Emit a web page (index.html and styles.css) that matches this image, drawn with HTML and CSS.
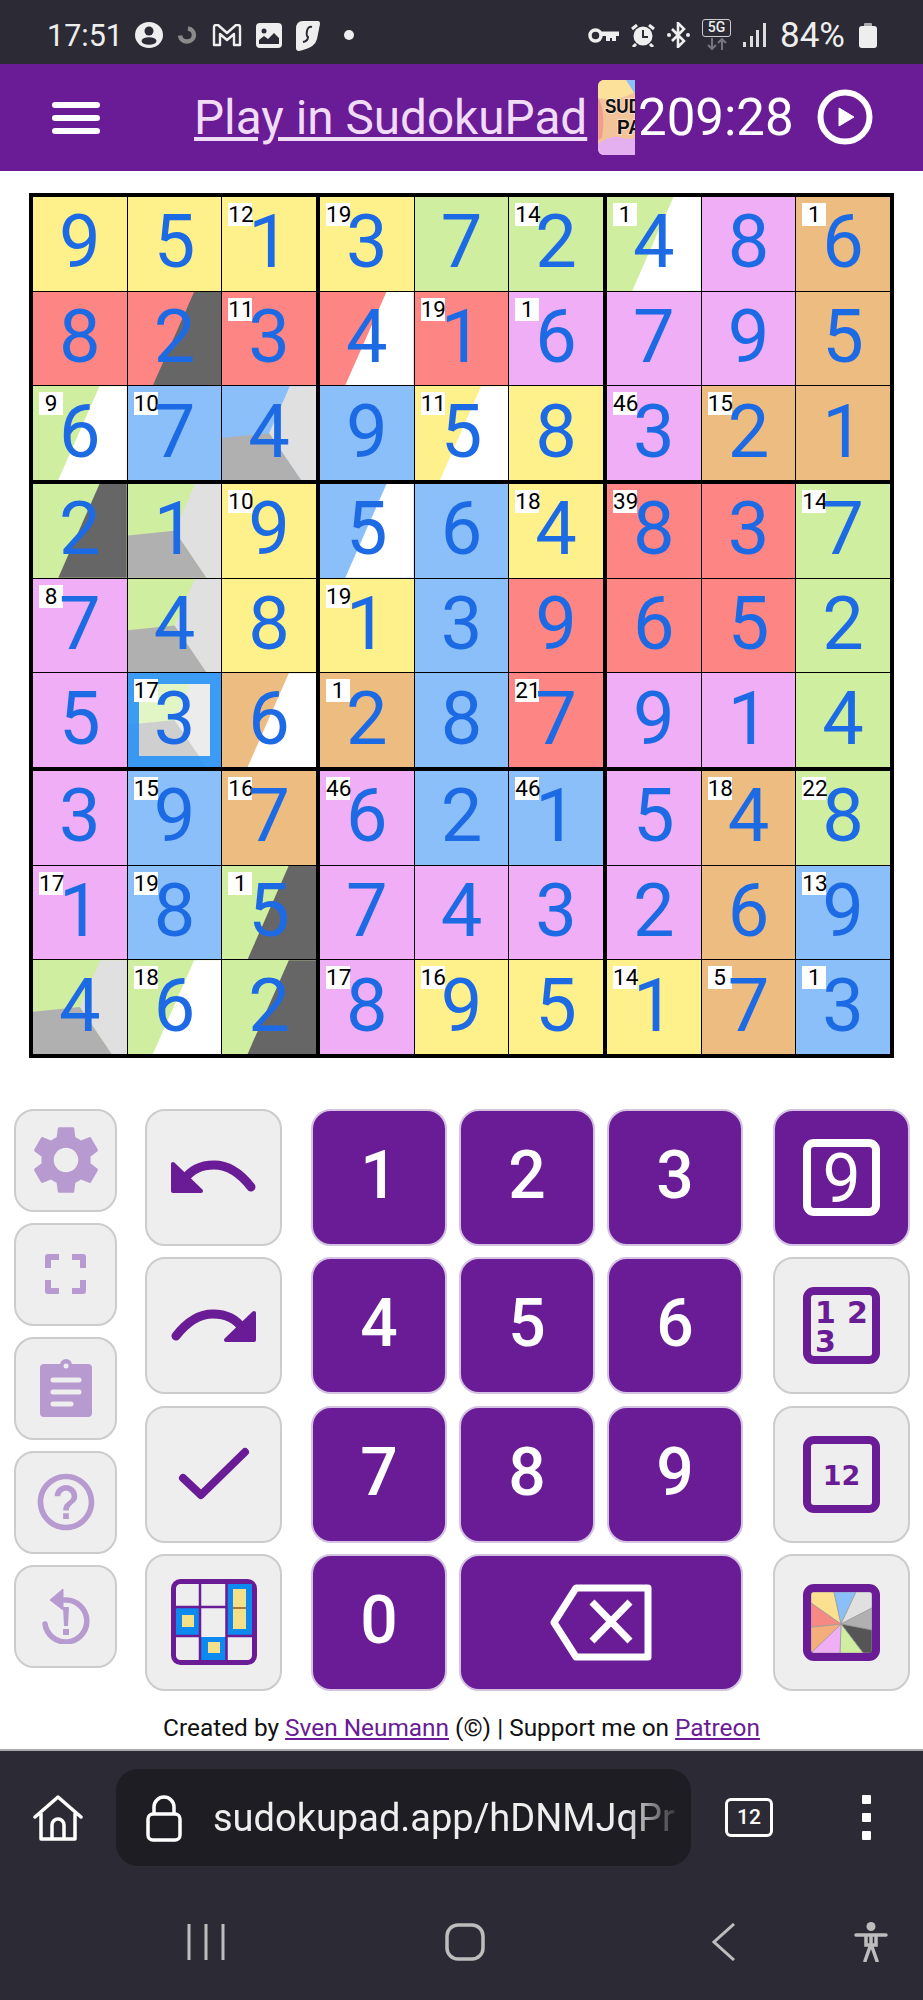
FILE: index.html
```html
<!DOCTYPE html>
<html lang="en">
<head>
    <meta charset="UTF-8">
    <meta name="viewport" content="width=device-width, initial-scale=1.0">
    <title>SudokuPad</title>
    <link rel="stylesheet" href="styles.css">
</head>
<body>
<div class="phone">
    <div class="status">
        <div class="status-left">
            <span class="clock">17:51</span>
            <svg class="st-person" width="28" height="26" viewBox="0 0 28 26"><ellipse cx="14" cy="13" rx="14" ry="13" fill="#eee"/><circle cx="14" cy="9" r="4.500" fill="#2c2b35"/><ellipse cx="14" cy="19" rx="7.500" ry="3.800" fill="#2c2b35"/></svg>
            <svg class="st-spin" width="21" height="18" viewBox="0 0 21 18"><path d="M11 2.500a7 6.500 0 1 1-8 7" fill="none" stroke="#8a8a8a" stroke-width="4.500"/></svg>
            <svg class="st-m" width="30" height="23" viewBox="0 0 30 23"><path d="M2 21V3q0-2 2-2h2l9 8 9-8h2q2 0 2 2v18h-6V10l-7 6-7-6v11z" fill="none" stroke="#eee" stroke-width="2.400" stroke-linejoin="round"/></svg>
            <svg class="st-img" width="26" height="25" viewBox="0 0 26 25"><rect width="26" height="25" rx="4" fill="#eee"/><circle cx="8" cy="8" r="2.500" fill="#2c2b35"/><path d="M3 21v-4l5-4 4 3 6-6 5 5v6z" fill="#2c2b35"/></svg>
            <svg class="st-shield" width="24" height="31" viewBox="0 0 24 31"><path d="M7 1h15q2 0 2 3l-3 15q-2 8-14 11l-4 1q-3 0-3-3V9q0-8 7-8z" fill="#eee"/><path d="M16 7q-4-1-5 4t1 6q0 4-5 5" fill="none" stroke="#2c2b35" stroke-width="2"/></svg>
            <span class="dot"></span>
        </div>
        <div class="status-right">
            <svg width="31" height="15" viewBox="0 0 31 15"><circle cx="7.500" cy="7.500" r="5.500" fill="none" stroke="#eee" stroke-width="3.500"/><path d="M13 3.500h18v4.500h-3v5h-4v-3h-2v3h-4V8h-5z" fill="#eee"/></svg>
            <svg width="24" height="23" viewBox="0 0 24 23"><circle cx="12" cy="12" r="9.500" fill="#eee"/><path d="M12 6v7h5" fill="none" stroke="#2c2b35" stroke-width="2"/><path d="M1 5l5-4M23 5l-5-4M5 20l-3 3M19 20l3 3" stroke="#eee" stroke-width="3"/></svg>
            <svg width="23" height="26" viewBox="0 0 23 26"><path d="M5 7l12 12-6 6V1l6 6L5 19" fill="none" stroke="#eee" stroke-width="2.600"/><circle cx="2" cy="13" r="2" fill="#eee"/><circle cx="21" cy="13" r="2" fill="#eee"/></svg>
            <div class="net">
                <span class="net-box">5G</span>
                <svg width="22" height="12" viewBox="0 0 22 12"><path d="M6 0v11M2 7l4 4 4-4M16 12V1M12 5l4-4 4 4" fill="none" stroke="#77767e" stroke-width="2"/></svg>
            </div>
            <svg width="23" height="24" viewBox="0 0 23 24"><path d="M0 19h3v5H0zM7 13h3v11H7zM13 7h3v17h-3zM20 0h3v24h-3z" fill="#ddd"/></svg>
            <span class="battery-text">84%</span>
            <svg class="st-batt" width="18" height="25" viewBox="0 0 18 25"><rect x="5" width="8" height="5" rx="1" fill="#aaa"/><rect y="3" width="18" height="22" rx="3" fill="#eee"/></svg>
        </div>
    </div>

    <header class="topbar">
        <div class="burger"><span></span><span></span><span></span></div>
        <a class="title" href="#">Play in SudokuPad</a>
        <svg class="logo" width="37" height="75" viewBox="0 0 37 75">
            <rect width="37" height="75" fill="#f3c39a"/>
            <path d="M0 0h37v12Q20 22 0 18z" fill="#fbe19a"/>
            <path d="M28 0h9v14z" fill="#8abffa"/>
            <path d="M0 18q8 12 4 40l-4 2z" fill="#f0a08a"/>
            <path d="M0 75V64q14-10 24-6 6 2 13 0v17z" fill="#e5b0f0"/>
            <text x="7" y="33" textLength="36" lengthAdjust="spacingAndGlyphs" class="logo-text">SUD</text>
            <text x="19" y="54" textLength="25" lengthAdjust="spacingAndGlyphs" class="logo-text">PA</text>
        </svg>
        <span class="timer">209:28</span>
        <svg class="play" width="56" height="56" viewBox="0 0 56 56"><circle cx="28" cy="28" r="24.500" fill="none" stroke="#fff" stroke-width="6"/><path d="M22 19l15 9-15 9z" fill="#fff" stroke="#fff" stroke-linejoin="round"/></svg>
    </header>

    <div class="board">
        <div class="box">
            <div class="cell y"><span class="num">9</span></div>
            <div class="cell y"><span class="num">5</span></div>
            <div class="cell y"><span class="clue">12</span><span class="num">1</span></div>
            <div class="cell r"><span class="num">8</span></div>
            <div class="cell r split to-d"><span class="num">2</span></div>
            <div class="cell r"><span class="clue">11</span><span class="num">3</span></div>
            <div class="cell g split to-w"><span class="clue">9</span><span class="num">6</span></div>
            <div class="cell b"><span class="clue">10</span><span class="num">7</span></div>
            <div class="cell b tri"><span class="num">4</span></div>
        </div>
        <div class="box">
            <div class="cell y"><span class="clue">19</span><span class="num">3</span></div>
            <div class="cell g"><span class="num">7</span></div>
            <div class="cell g"><span class="clue">14</span><span class="num">2</span></div>
            <div class="cell r split to-w"><span class="num">4</span></div>
            <div class="cell r"><span class="clue">19</span><span class="num">1</span></div>
            <div class="cell p"><span class="clue">1</span><span class="num">6</span></div>
            <div class="cell b"><span class="num">9</span></div>
            <div class="cell y split to-w"><span class="clue">11</span><span class="num">5</span></div>
            <div class="cell y"><span class="num">8</span></div>
        </div>
        <div class="box">
            <div class="cell g split to-w"><span class="clue">1</span><span class="num">4</span></div>
            <div class="cell p"><span class="num">8</span></div>
            <div class="cell o"><span class="clue">1</span><span class="num">6</span></div>
            <div class="cell p"><span class="num">7</span></div>
            <div class="cell p"><span class="num">9</span></div>
            <div class="cell o"><span class="num">5</span></div>
            <div class="cell p"><span class="clue">46</span><span class="num">3</span></div>
            <div class="cell o"><span class="clue">15</span><span class="num">2</span></div>
            <div class="cell o"><span class="num">1</span></div>
        </div>
        <div class="box">
            <div class="cell g split to-d"><span class="num">2</span></div>
            <div class="cell g tri"><span class="num">1</span></div>
            <div class="cell y"><span class="clue">10</span><span class="num">9</span></div>
            <div class="cell p"><span class="clue">8</span><span class="num">7</span></div>
            <div class="cell g tri"><span class="num">4</span></div>
            <div class="cell y"><span class="num">8</span></div>
            <div class="cell p"><span class="num">5</span></div>
            <div class="cell g tri"><span class="sel"></span><span class="clue">17</span><span class="num">3</span></div>
            <div class="cell o split to-w"><span class="num">6</span></div>
        </div>
        <div class="box">
            <div class="cell b split to-w"><span class="num">5</span></div>
            <div class="cell b"><span class="num">6</span></div>
            <div class="cell y"><span class="clue">18</span><span class="num">4</span></div>
            <div class="cell y"><span class="clue">19</span><span class="num">1</span></div>
            <div class="cell b"><span class="num">3</span></div>
            <div class="cell r"><span class="num">9</span></div>
            <div class="cell o"><span class="clue">1</span><span class="num">2</span></div>
            <div class="cell b"><span class="num">8</span></div>
            <div class="cell r"><span class="clue">21</span><span class="num">7</span></div>
        </div>
        <div class="box">
            <div class="cell r"><span class="clue">39</span><span class="num">8</span></div>
            <div class="cell r"><span class="num">3</span></div>
            <div class="cell g"><span class="clue">14</span><span class="num">7</span></div>
            <div class="cell r"><span class="num">6</span></div>
            <div class="cell r"><span class="num">5</span></div>
            <div class="cell g"><span class="num">2</span></div>
            <div class="cell p"><span class="num">9</span></div>
            <div class="cell p"><span class="num">1</span></div>
            <div class="cell g"><span class="num">4</span></div>
        </div>
        <div class="box">
            <div class="cell p"><span class="num">3</span></div>
            <div class="cell b"><span class="clue">15</span><span class="num">9</span></div>
            <div class="cell o"><span class="clue">16</span><span class="num">7</span></div>
            <div class="cell p"><span class="clue">17</span><span class="num">1</span></div>
            <div class="cell b"><span class="clue">19</span><span class="num">8</span></div>
            <div class="cell g split to-d"><span class="clue">1</span><span class="num">5</span></div>
            <div class="cell g tri"><span class="num">4</span></div>
            <div class="cell g split to-w"><span class="clue">18</span><span class="num">6</span></div>
            <div class="cell g split to-d"><span class="num">2</span></div>
        </div>
        <div class="box">
            <div class="cell p"><span class="clue">46</span><span class="num">6</span></div>
            <div class="cell b"><span class="num">2</span></div>
            <div class="cell b"><span class="clue">46</span><span class="num">1</span></div>
            <div class="cell p"><span class="num">7</span></div>
            <div class="cell p"><span class="num">4</span></div>
            <div class="cell p"><span class="num">3</span></div>
            <div class="cell p"><span class="clue">17</span><span class="num">8</span></div>
            <div class="cell y"><span class="clue">16</span><span class="num">9</span></div>
            <div class="cell y"><span class="num">5</span></div>
        </div>
        <div class="box">
            <div class="cell p"><span class="num">5</span></div>
            <div class="cell o"><span class="clue">18</span><span class="num">4</span></div>
            <div class="cell g"><span class="clue">22</span><span class="num">8</span></div>
            <div class="cell p"><span class="num">2</span></div>
            <div class="cell o"><span class="num">6</span></div>
            <div class="cell b"><span class="clue">13</span><span class="num">9</span></div>
            <div class="cell y"><span class="clue">14</span><span class="num">1</span></div>
            <div class="cell o"><span class="clue">5</span><span class="num">7</span></div>
            <div class="cell b"><span class="clue">1</span><span class="num">3</span></div>
        </div>
    </div>

    <div class="controls">
        <div class="side">
            <button class="key small">
                <svg width="82" height="82" viewBox="0 0 24 24"><path fill="#b79ad0" d="M19.14 12.94c.04-.3.06-.61.06-.94 0-.32-.02-.64-.07-.94l2.03-1.58a.49.49 0 0 0 .12-.61l-1.92-3.32a.488.488 0 0 0-.59-.22l-2.39.96c-.5-.38-1.03-.7-1.62-.94l-.36-2.54a.484.484 0 0 0-.48-.41h-3.84c-.24 0-.43.17-.47.41l-.36 2.54c-.59.24-1.13.57-1.62.94l-2.39-.96c-.22-.08-.47 0-.59.22L2.74 8.87c-.12.21-.08.47.12.61l2.03 1.58c-.05.3-.09.63-.09.94s.02.64.07.94l-2.03 1.58a.49.49 0 0 0-.12.61l1.92 3.32c.12.22.37.29.59.22l2.39-.96c.5.38 1.03.7 1.62.94l.36 2.54c.05.24.24.41.48.41h3.84c.24 0 .44-.17.47-.41l.36-2.54c.59-.24 1.13-.56 1.62-.94l2.39.96c.22.08.47 0 .59-.22l1.92-3.32c.12-.22.07-.47-.12-.61l-2.01-1.58zM12 15.6c-1.98 0-3.6-1.62-3.6-3.6s1.62-3.6 3.6-3.6 3.6 1.62 3.6 3.6-1.62 3.6-3.6 3.6z"/></svg>
            </button>
            <button class="key small">
                <svg width="41" height="40" viewBox="0 0 41 40"><path d="M3 14V3h11M27 3h11v11M38 26v11H27M14 37H3V26" fill="none" stroke="#b79ad0" stroke-width="6" stroke-linejoin="round"/></svg>
            </button>
            <button class="key small">
                <svg width="52" height="58" viewBox="0 0 52 58"><rect y="5" width="52" height="53" rx="4" fill="#b79ad0"/><circle cx="26" cy="6" r="6" fill="#b79ad0"/><circle cx="26" cy="7" r="2.500" fill="#eee"/><path d="M13 21h26M13 33h26M13 45h18" stroke="#eee" stroke-width="5" stroke-linecap="round"/></svg>
            </button>
            <button class="key small">
                <svg width="68" height="68" viewBox="0 0 24 24"><path fill="#b79ad0" d="M11 18h2v-2h-2v2zm1-16C6.48 2 2 6.48 2 12s4.48 10 10 10 10-4.48 10-10S17.52 2 12 2zm0 18c-4.41 0-8-3.59-8-8s3.59-8 8-8 8 3.59 8 8-3.590 8-8 8zm0-14c-2.21 0-4 1.79-4 4h2c0-1.100.9-2 2-2s2 .9 2 2c0 2-3 1.750-3 5h2c0-2.250 3-2.500 3-5 0-2.210-1.790-4-4-4z"/></svg>
            </button>
            <button class="key small">
                <svg width="48" height="56" viewBox="0 0 48 56"><path d="M3 36a21 21 0 1 0 21-24h-4" fill="none" stroke="#b79ad0" stroke-width="5.500" stroke-linecap="round"/><path d="M21 1L8 12l13 10z" fill="#b79ad0" stroke="#b79ad0" stroke-linejoin="round"/><path d="M21 19h6l-1 19h-4z" fill="#b79ad0"/><rect x="21" y="41" width="6" height="6" fill="#b79ad0"/></svg>
            </button>
        </div>

        <div class="tools">
            <button class="key">
                <svg width="87" height="34" viewBox="0 0 87 34"><path d="M81 27Q64 5 44 5T14 20" fill="none" stroke="#6a1b96" stroke-width="9" stroke-linecap="round"/><path d="M3 4v27h28z" fill="#6a1b96" stroke="#6a1b96" stroke-width="4" stroke-linejoin="round"/></svg>
            </button>
            <button class="key">
                <svg class="flip" width="87" height="34" viewBox="0 0 87 34"><path d="M81 27Q64 5 44 5T14 20" fill="none" stroke="#6a1b96" stroke-width="9" stroke-linecap="round"/><path d="M3 4v27h28z" fill="#6a1b96" stroke="#6a1b96" stroke-width="4" stroke-linejoin="round"/></svg>
            </button>
            <button class="key">
                <svg width="72" height="54" viewBox="0 0 72 54"><path d="M5 31l18 17L67 5" fill="none" stroke="#6a1b96" stroke-width="8" stroke-linecap="round" stroke-linejoin="round"/></svg>
            </button>
            <button class="key">
                <svg width="86" height="86" viewBox="0 0 86 86">
                    <rect x="2.500" y="2.500" width="81" height="81" rx="7" fill="#eee" stroke="#6a1b96" stroke-width="5"/>
                    <path d="M56 5h25v51H56zM5 29h23v27H5zM30 58h25v23H30z" fill="#0d8af0"/>
                    <path d="M62 10h13v18H62zM62 30h13v20H62zM11 36h12v12H11zM37 63h12v11H37z" fill="#f5e08a"/>
                    <path d="M62 28h13v2H62z" fill="#a9763f"/>
                    <path d="M29 4v78M55.500 4v78M4 28h52M56 57h26M4 57h26" stroke="#6a1b96" stroke-width="2.500"/>
                </svg>
            </button>
        </div>

        <div class="numpad">
            <button class="key dark num-key">1</button>
            <button class="key dark num-key">2</button>
            <button class="key dark num-key">3</button>
            <button class="key dark num-key">4</button>
            <button class="key dark num-key">5</button>
            <button class="key dark num-key">6</button>
            <button class="key dark num-key">7</button>
            <button class="key dark num-key">8</button>
            <button class="key dark num-key">9</button>
            <button class="key dark num-key">0</button>
            <button class="key dark wide">
                <svg width="102" height="77" viewBox="0 0 102 77"><path d="M4 38.500L26 4h72v69H26z" fill="none" stroke="#fff" stroke-width="7" stroke-linejoin="round"/><path d="M42 18l38 39M80 18L42 57" stroke="#fff" stroke-width="7"/></svg>
            </button>
        </div>

        <div class="modes">
            <button class="key dark">
                <svg width="77" height="77" viewBox="0 0 77 77"><rect x="4" y="4" width="69" height="69" rx="7" fill="none" stroke="#fff" stroke-width="8"/><text x="38.500" y="63" class="mode-big">9</text></svg>
            </button>
            <button class="key">
                <svg width="77" height="77" viewBox="0 0 77 77"><rect x="4" y="4" width="69" height="69" rx="7" fill="none" stroke="#6a1b96" stroke-width="8"/><text x="12" y="36" class="mode-small">1</text><text x="44" y="36" class="mode-small">2</text><text x="12" y="65" class="mode-small">3</text></svg>
            </button>
            <button class="key">
                <svg width="77" height="77" viewBox="0 0 77 77"><rect x="4" y="4" width="69" height="69" rx="7" fill="none" stroke="#6a1b96" stroke-width="8"/><text x="38.500" y="49" class="mode-mid">12</text></svg>
            </button>
            <button class="key">
                <svg width="77" height="77" viewBox="0 0 77 77">
                    <g stroke="#999" stroke-width=".7">
                        <path d="M38 40L31 8H8v11z" fill="#fbe08f"/>
                        <path d="M38 40L53 8H31z" fill="#8abffa"/>
                        <path d="M38 40L69 24V8H53z" fill="#e0e0e0"/>
                        <path d="M38 40L69 46V24z" fill="#b0b0b0"/>
                        <path d="M38 40L60 69h9V46z" fill="#555"/>
                        <path d="M38 40L37 69h23z" fill="#cfee9f"/>
                        <path d="M38 40L8 69h29z" fill="#efaef5"/>
                        <path d="M38 40L8 43v26z" fill="#f4ae7c"/>
                        <path d="M38 40L8 19v24z" fill="#f58a85"/>
                    </g>
                    <rect x="4" y="4" width="69" height="69" rx="7" fill="none" stroke="#6a1b96" stroke-width="8"/>
                </svg>
            </button>
        </div>
    </div>

    <footer class="credits">Created by <a href="#">Sven Neumann</a> (©) | Support me on <a href="#">Patreon</a></footer>

    <div class="browser">
        <div class="url-row">
            <svg width="52" height="46" viewBox="0 0 52 46"><path d="M3 22L26 2l23 20M9 19v25h34V19M20 44V30a6 6 0 0 1 12 0v14" fill="none" stroke="#fff" stroke-width="3.500" stroke-linejoin="round" stroke-linecap="round"/></svg>
            <div class="url-pill">
                <svg width="36" height="48" viewBox="0 0 36 48"><rect x="2" y="20" width="32" height="26" rx="5" fill="none" stroke="#fff" stroke-width="3.500"/><path d="M8 20v-7a10 10 0 0 1 20 0v7" fill="none" stroke="#fff" stroke-width="3.500"/></svg>
                <span class="url-text">sudokupad.app/hDNMJqPr</span>
            </div>
            <span class="tabs">12</span>
            <div class="more"><span></span><span></span><span></span></div>
        </div>
        <div class="nav-row">
            <svg class="nav-recents" width="38" height="38" viewBox="0 0 38 38"><path d="M2 1v36M19 1v36M36 1v36" stroke="#bdbdbd" stroke-width="3"/></svg>
            <svg class="nav-home" width="40" height="38" viewBox="0 0 40 38"><rect x="2" y="2" width="36" height="34" rx="11" fill="none" stroke="#bdbdbd" stroke-width="3.500"/></svg>
            <svg class="nav-back" width="24" height="38" viewBox="0 0 24 38"><path d="M22 1L2 19l20 18" fill="none" stroke="#bdbdbd" stroke-width="3"/></svg>
            <svg class="nav-a11y" width="34" height="40" viewBox="0 0 34 40"><circle cx="17" cy="4.500" r="4.500" fill="#bdbdbd"/><path d="M2 13h30M17 13v10M11 39l6-17 6 17M12 13v10h10V13" fill="none" stroke="#bdbdbd" stroke-width="3.500" stroke-linecap="round"/></svg>
        </div>
    </div>
</div>
</body>
</html>
```

FILE: styles.css
```css
* {
    box-sizing: border-box;
}

body {
    margin: 0;
    background: #fff;
    font-family: Roboto, "Liberation Sans", sans-serif;
}

.phone {
    width: 923px;
    height: 2000px;
    display: flex;
    flex-direction: column;
    overflow: hidden;
}

/* status bar */
.status {
    height: 64px;
    flex: none;
    background: #2c2b35;
    color: #eee;
    display: flex;
    justify-content: space-between;
    align-items: center;
    padding: 6px 46px 0 47px;
}

.status-left,
.status-right {
    display: flex;
    align-items: center;
}

.status-left {
    gap: 14px;
}

.status-right {
    gap: 12px;
}

.clock {
    font-size: 30.500px;
    width: 74px;
    white-space: nowrap;
}

.battery-text {
    font-size: 35px;
    width: 67px;
    margin-left: 2px;
    white-space: nowrap;
}

.dot {
    width: 10px;
    height: 10px;
    border-radius: 50%;
    background: #eee;
    margin-left: 10px;
}

.net {
    display: flex;
    flex-direction: column;
    align-items: center;
    width: 29px;
    gap: 1px;
    margin-top: -2px;
}

.net-box {
    width: 29px;
    height: 18px;
    border: 1.5px solid #ccc;
    border-radius: 3px;
    font-size: 14px;
    font-weight: 500;
    line-height: 15px;
    text-align: center;
}

/* purple top bar */
.topbar {
    height: 107px;
    flex: none;
    background: #6a1b96;
    display: flex;
    align-items: center;
    padding-left: 52px;
}

.burger {
    width: 48px;
    display: flex;
    flex-direction: column;
    gap: 7px;
    margin-right: 94px;
}

.burger span {
    height: 6px;
    border-radius: 3px;
    background: #fff;
}

.title {
    color: #f0dcf7;
    font-size: 47.700px;
    width: 391px;
    white-space: nowrap;
}

.logo {
    margin-left: 13px;
    border-radius: 6px 0 0 6px;
}

.logo-text {
    font-family: "Liberation Sans", sans-serif;
    font-weight: bold;
    font-size: 20px;
    fill: #111;
    stroke: rgba(255, 255, 255, .45);
    stroke-width: 2px;
    paint-order: stroke;
}

.timer {
    color: #fff;
    font-size: 51px;
    margin-left: 3px;
    width: 172px;
    white-space: nowrap;
}

.play {
    margin-top: -2px;
    margin-left: 7px;
}

/* board */
.board {
    width: 865px;
    flex: none;
    margin: 22px 0 0 29px;
    padding: 4px;
    background: #000;
    display: grid;
    grid-template-columns: repeat(3, 1fr);
    gap: 4px;
}

.box {
    display: grid;
    grid-template-columns: repeat(3, 1fr);
    gap: 1px;
}

.cell {
    position: relative;
    height: 93.67px;
    background: var(--a);
    display: flex;
    justify-content: center;
    align-items: center;
    padding-bottom: 3px;
}

.y { --a: #fef18b; }
.g { --a: #cfee9f; }
.p { --a: #efaef5; }
.o { --a: #ecbc80; }
.r { --a: #fd8584; }
.b { --a: #8abffa; }

.to-w { --b: #fff; }
.to-d { --b: #666; }

.split::before {
    content: "";
    position: absolute;
    inset: 0;
    background: var(--b);
    clip-path: polygon(71% 0, 100% 0, 100% 100%, 27% 100%);
}

.tri::before {
    content: "";
    position: absolute;
    inset: 0;
    background: #e0e0e0;
    clip-path: polygon(72% 0, 100% 0, 100% 100%, 84% 100%, 50% 50%);
}

.tri::after {
    content: "";
    position: absolute;
    inset: 0;
    background: #b0b0b0;
    clip-path: polygon(0 55%, 50% 50%, 84% 100%, 0 100%);
}

.sel {
    position: absolute;
    z-index: 1;
    inset: 0;
    border: 11px solid rgba(44, 148, 245, .92);
    background: rgba(255, 255, 255, .4);
}

.num {
    position: relative;
    z-index: 1;
    font-size: 74px;
    line-height: 1;
    color: #1d6ae5;
}

.clue {
    position: absolute;
    z-index: 1;
    left: 6px;
    top: 6px;
    width: 24px;
    height: 23px;
    background: #fff;
    color: #000;
    font-size: 22.500px;
    line-height: 23px;
    text-align: center;
    white-space: nowrap;
}

/* buttons under the board */
.controls {
    flex: none;
    display: flex;
    margin: 51px 0 0 14px;
}

.key {
    padding: 0;
    border: 2px solid #ccc;
    border-radius: 20px;
    background: #eee;
    display: flex;
    justify-content: center;
    align-items: center;
}

.key.dark {
    background: #6a1b96;
    border-color: #d4c2e2;
    color: #fff;
}

.side {
    width: 103px;
    height: 559px;
    display: flex;
    flex-direction: column;
    justify-content: space-between;
}

.small {
    height: 103px;
}

.tools,
.modes {
    width: 137px;
    height: 582px;
    display: grid;
    grid-template-rows: repeat(4, 1fr);
    gap: 11.300px;
}

.tools {
    margin-left: 28px;
}

.flip {
    transform: scaleX(-1);
}

.numpad {
    width: 432px;
    height: 582px;
    margin-left: 29px;
    display: grid;
    grid-template-columns: repeat(3, 1fr);
    grid-template-rows: repeat(4, 1fr);
    gap: 11.300px 12px;
}

.num-key {
    font-family: Roboto, sans-serif;
    font-weight: 500;
    font-size: 66px;
    padding-bottom: 4px;
}

.wide {
    grid-column: span 2;
}

.modes {
    margin-left: 30px;
}

.mode-big {
    font-family: Roboto, sans-serif;
    font-size: 68px;
    fill: #fff;
    text-anchor: middle;
}

.mode-small {
    font-family: "DejaVu Sans", sans-serif;
    font-weight: bold;
    font-size: 30px;
    fill: #6a1b96;
}

.mode-mid {
    font-family: "DejaVu Sans", sans-serif;
    font-weight: bold;
    font-size: 27px;
    fill: #6a1b96;
    text-anchor: middle;
}

/* footer line */
.credits {
    flex: 1;
    min-height: 0;
    padding-top: 23px;
    font-size: 24.400px;
    line-height: 27px;
    color: #111;
    text-align: center;
    white-space: nowrap;
}

.credits a {
    color: #6a1b96;
}

/* browser chrome */
.browser {
    height: 251px;
    flex: none;
    background: #2c2b35;
    border-top: 2px solid #aaa;
}

.url-row {
    display: flex;
    align-items: center;
    padding: 18px 0 0 32px;
}

.url-pill {
    width: 575px;
    height: 97px;
    margin-left: 32px;
    padding-left: 30px;
    border-radius: 22px;
    background: #1e1d24;
    display: flex;
    align-items: center;
    gap: 31px;
}

.url-text {
    width: 469px;
    overflow: hidden;
    white-space: nowrap;
    color: #eee;
    font-size: 38px;
    mask-image: linear-gradient(to right, #000 88%, transparent);
}

.tabs {
    width: 48px;
    height: 39px;
    margin-left: 34px;
    border: 3px solid #fff;
    border-radius: 6px;
    color: #fff;
    font-size: 21px;
    font-weight: 500;
    line-height: 33px;
    text-align: center;
}

.more {
    margin-left: 89px;
    display: flex;
    flex-direction: column;
    gap: 9px;
}

.more span {
    width: 9px;
    height: 9px;
    background: #fff;
    border-radius: 1px;
}

.nav-row {
    display: flex;
    align-items: center;
    margin-top: 56px;
    padding-left: 187px;
}

.nav-home {
    margin-left: 220px;
}

.nav-back {
    margin-left: 227px;
}

.nav-a11y {
    margin-left: 118px;
}
```
